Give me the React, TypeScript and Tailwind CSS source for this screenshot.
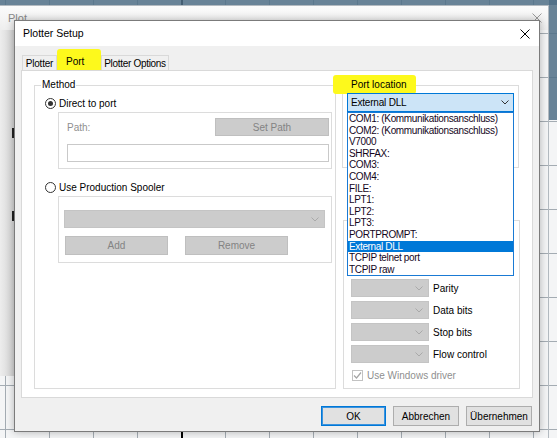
import type { ReactNode } from 'react';

const PORTS = [
  'COM1: (Kommunikationsanschluss)',
  'COM2: (Kommunikationsanschluss)',
  'V7000',
  'SHRFAX:',
  'COM3:',
  'COM4:',
  'FILE:',
  'LPT1:',
  'LPT2:',
  'LPT3:',
  'PORTPROMPT:',
  'External DLL',
  'TCPIP telnet port',
  'TCPIP raw',
];

const SELECTED_PORT = 'External DLL';

const SERIAL_FIELDS = ['Parity', 'Data bits', 'Stop bits', 'Flow control'];

const CloseGlyph = ({ className }: { className?: string }) => (
  <svg width="10" height="10" viewBox="0 0 10 10" className={className}>
    <path d="M0.5 0.5L9.5 9.5M9.5 0.5L0.5 9.5" stroke="currentColor" strokeWidth="1" />
  </svg>
);

const Chevron = ({ className }: { className?: string }) => (
  <svg width="8" height="5" viewBox="0 0 8 5" fill="none" className={className}>
    <path d="M0.5 0.5L4 4L7.5 0.5" stroke="currentColor" strokeWidth="1" />
  </svg>
);

const Radio = ({ checked }: { checked?: boolean }) => (
  <span className="flex h-[11px] w-[11px] shrink-0 items-center justify-center rounded-full border border-[#333] bg-white">
    {checked && <span className="h-[5px] w-[5px] rounded-full bg-[#333]" />}
  </span>
);

// greyed-out push button
const DisabledButton = ({ children, className }: { children: ReactNode; className: string }) => (
  <div
    className={`flex items-center justify-center border border-[#bfbfbf] bg-[#cccccc] text-[10px] text-[#838383] ${className}`}
  >
    {children}
  </div>
);

const DisabledCombo = ({ className }: { className: string }) => (
  <div className={`flex items-center justify-end border border-[#c4c4c4] bg-[#cccccc] ${className}`}>
    <Chevron className="text-[#a9a9a9]" />
  </div>
);

const DialogButton = ({ children, primary }: { children: ReactNode; primary?: boolean }) => (
  <div
    className={
      primary
        ? 'flex h-[20px] w-[65px] items-center justify-center border border-[#0078d7] bg-[#e1e1e1] text-[10px] text-black shadow-[inset_0_0_0_1px_#3c93de]'
        : 'flex h-[20px] w-[66px] items-center justify-center border border-[#adadad] bg-[#e1e1e1] text-[10px] text-black'
    }
  >
    {children}
  </div>
);

const MethodGroup = () => (
  <fieldset className="h-[310px] w-[302px] shrink-0 border border-[#dcdcdc]">
    <legend className="ml-[6px] px-[1px] text-[10px] leading-[12px] text-black">Method</legend>

    <div className="mt-[6px] flex h-[13px] items-center gap-[3px] pl-[10px] text-[10px] text-black">
      <Radio checked />
      <span>Direct to port</span>
    </div>

    <div className="ml-[23px] mr-[3px] mt-[2px] h-[57px] border border-[#dcdcdc] pl-[8px] pr-[2px] pt-[5px]">
      <div className="flex h-[18px] items-center justify-between">
        <span className="text-[10px] text-[#8f8f8f]">Path:</span>
        <DisabledButton className="h-[18px] w-[114px]">Set Path</DisabledButton>
      </div>
      <div className="mt-[8px] h-[18px] border border-[#c9c9c9] bg-white" />
    </div>

    <div className="mt-[12px] flex h-[13px] items-center gap-[3px] pl-[10px] text-[10px] text-black">
      <Radio />
      <span>Use Production Spooler</span>
    </div>

    <div className="ml-[23px] mr-[3px] mt-[2px] h-[67px] border border-[#dcdcdc] pl-[5px] pr-[6px] pt-[13px]">
      <DisabledCombo className="h-[18px] w-full pr-[5px]" />
      <div className="mt-[8px] flex gap-[17px] pl-[1px]">
        <DisabledButton className="h-[19px] w-[103px]">Add</DisabledButton>
        <DisabledButton className="h-[19px] w-[103px]">Remove</DisabledButton>
      </div>
    </div>
  </fieldset>
);

const PortLocationGroup = () => (
  <fieldset className="h-[89px] w-[177px] border border-[#dcdcdc]">
    <legend className="relative ml-[7px] px-[1px] text-[10px] leading-[12px] text-black">
      <span className="absolute -bottom-[3px] -left-[17px] -right-[8px] -top-[4px] rounded-[3px] bg-[#fdf91c]" />
      <span className="relative">Port location</span>
    </legend>

    <div className="relative ml-[4px] mt-[2px] flex h-[19px] w-[167px] items-center justify-between border border-[#0078d7] bg-[#cce4f7] pl-[3px] pr-[4px] text-[10px] tracking-[-0.2px] text-black">
      <span>{SELECTED_PORT}</span>
      <Chevron className="text-[#333]" />

      {/* open drop-down list */}
      <ul className="absolute -left-px top-[18px] z-10 w-[167px] border border-[#1a7ad4] bg-white">
        {PORTS.map((port) => (
          <li
            key={port}
            className={
              port === SELECTED_PORT
                ? 'h-[11.6px] whitespace-nowrap bg-[#0078d7] pl-[1px] text-[10px] leading-[11.6px] tracking-[-0.35px] text-white'
                : 'h-[11.6px] whitespace-nowrap pl-[1px] text-[10px] leading-[11.6px] tracking-[-0.35px] text-[#14061c]'
            }
          >
            {port}
          </li>
        ))}
      </ul>
    </div>
  </fieldset>
);

const SerialGroup = () => (
  <div className="ml-px mt-[52px] h-[169px] w-[177px] border border-[#dcdcdc] pl-[7px] pt-[58px]">
    <div className="flex flex-col gap-[4px]">
      {SERIAL_FIELDS.map((label) => (
        <div key={label} className="flex h-[18px] items-center gap-[4px]">
          <DisabledCombo className="h-[18px] w-[78px] pr-[5px]" />
          <span className="text-[10px] text-black">{label}</span>
        </div>
      ))}
    </div>
    <div className="mt-[7px] flex h-[11px] items-center gap-[4px] pl-[1px]">
      <span className="flex h-[11px] w-[11px] items-center justify-center border border-[#c2c2c2] bg-white">
        <svg width="9" height="9" viewBox="0 0 9 9" fill="none">
          <path d="M1 4.5L3.5 7L8 1.5" stroke="#a5a5a5" strokeWidth="1.2" />
        </svg>
      </span>
      <span className="text-[10px] text-[#8f8f8f]">Use Windows driver</span>
    </div>
  </div>
);

const PlotterSetup = () => (
  <div className="absolute left-[14px] top-[20px] flex h-[412px] w-[526px] flex-col border border-[#7b7b7b] bg-[#f0f0f0] shadow-[0_0_8px_rgba(0,0,0,0.28)]">
    <div className="flex h-[25px] items-center justify-between bg-white pl-[8px] pr-[9px] text-[10.5px] text-black">
      <span>Plotter Setup</span>
      <CloseGlyph className="text-black" />
    </div>

    <div className="flex flex-1 flex-col px-[6px] pt-[4px]">
      {/* tab strip */}
      <div className="flex h-[20px] items-end whitespace-nowrap pl-[1px] text-[10px] text-black">
        <div className="flex h-[15px] w-[35px] items-center justify-center border border-b-0 border-[#d9d9d9] bg-[#f0f0f0] tracking-[-0.2px]">
          Plotter
        </div>
        <div className="flex h-[21px] w-[44px] items-center rounded-t-[3px] bg-[#fdf91c] pl-[9px] pt-[3px]">Port</div>
        <div className="flex h-[15px] w-[68px] items-center justify-center border border-b-0 border-[#d9d9d9] bg-[#f0f0f0] tracking-[-0.3px]">
          Plotter Options
        </div>
      </div>

      <div className="flex h-[328px] gap-[6px] border border-[#d9d9d9] bg-white pl-[12px] pt-[8px]">
        <MethodGroup />
        <div className="flex flex-col">
          <PortLocationGroup />
          <SerialGroup />
        </div>
      </div>

      <div className="mt-[8px] flex justify-end gap-[7px] pr-px">
        <DialogButton primary>OK</DialogButton>
        <DialogButton>Abbrechen</DialogButton>
        <DialogButton>Übernehmen</DialogButton>
      </div>
    </div>
  </div>
);

const PlotWindow = () => (
  <div className="absolute left-0 top-[5px] flex h-[433px] w-[549px] flex-col border-r border-t border-[#b3bac0]">
    <div className="flex h-[24px] items-center justify-between bg-gradient-to-b from-[#fbfbfb] to-[#eeeeee] pl-[8px] pr-[6px] text-[11px] text-[#8a8a8a]">
      <span>Plot</span>
      <CloseGlyph className="text-[#9c9c9c]" />
    </div>
    <div className="flex h-[346px] w-[14px] flex-col items-end bg-gradient-to-r from-[#ededed] to-[#d3d3d3]">
      <div className="mt-[98px] h-[10px] w-[2px] bg-[#222]" />
      <div className="mt-[73px] h-[10px] w-[2px] bg-[#222]" />
    </div>
  </div>
);

export default function App() {
  return (
    <div className="relative h-[438px] w-[557px] overflow-hidden bg-[#f4f5f6] font-['Liberation_Sans',Arial,sans-serif] [background-image:linear-gradient(to_right,#a4acb3_1px,transparent_1px),linear-gradient(to_bottom,#a4acb3_1px,transparent_1px)] [background-position:5px_33px] [background-size:44px_44px]">
      {/* heavy axis line on the drawing sheet */}
      <div className="absolute left-[181px] top-0 h-full w-[2px] bg-black" />
      {/* dimmed desktop band */}
      <div className="absolute left-0 top-0 h-[5px] w-full bg-[#4f6f86]/85" />
      <div className="absolute right-0 top-0 h-[120px] w-[8px] bg-[#4f6f86]/85" />

      <PlotWindow />
      <PlotterSetup />
    </div>
  );
}
